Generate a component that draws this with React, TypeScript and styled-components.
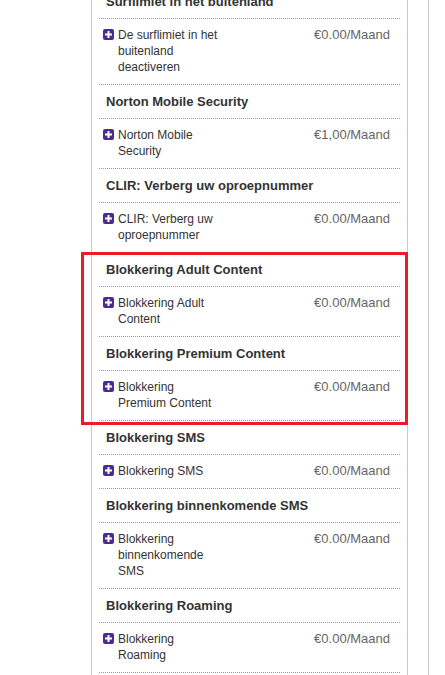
import React from "react";
import styled, { createGlobalStyle } from "styled-components";

const GlobalStyle = createGlobalStyle`
  html, body {
    margin: 0;
    padding: 0;
    background: #ffffff;
    overflow: hidden;
  }
  body {
    font-family: "Liberation Sans", Arial, sans-serif;
    color: #333333;
  }
`;

const Outer = styled.div`
  width: 428px;
  min-height: 700px;
  border-right: 1px solid #c9c9c9;
`;

const Panel = styled.div`
  margin-left: 91px;
  margin-top: -15px;
  width: 301px;
  min-height: 716px;
  padding: 0 7px;
  border-left: 1px solid #c9c9c9;
  border-right: 1px solid #c9c9c9;
  background: #ffffff;
`;

const Heading = styled.div`
  padding: 8px 7px;
  font-size: 13px;
  line-height: 17px;
  font-weight: bold;
  color: #333333;
  border-bottom: 1px dotted #9a9a9a;
  white-space: nowrap;
`;

const ItemRow = styled.div`
  display: flex;
  justify-content: space-between;
  align-items: flex-start;
  padding: 8px 10px 9px 4px;
  border-bottom: 1px dotted #9a9a9a;
`;

const Name = styled.div`
  display: flex;
  align-items: flex-start;
  gap: 4px;
`;

const NameText = styled.span`
  width: 104px;
  font-size: 12px;
  line-height: 16px;
  color: #333333;
`;

const Price = styled.span`
  font-size: 13px;
  line-height: 16px;
  color: #666666;
  white-space: nowrap;
`;

const PlusBox = styled.svg`
  flex: none;
  width: 11px;
  height: 11px;
  margin-top: 2px;
`;

const HighlightGroup = styled.div`
  position: relative;
  &::after {
    content: "";
    position: absolute;
    top: -1px;
    left: -18px;
    right: -8px;
    bottom: -4px;
    border: 3px solid #ed1c24;
    pointer-events: none;
  }
`;

const PlusIcon = () => (
  <PlusBox viewBox="0 0 11 11" aria-hidden="true">
    <rect x="0" y="0" width="11" height="11" rx="2" fill="#4b2c8c" />
    <rect x="2" y="4.5" width="7" height="2" fill="#ffffff" />
    <rect x="4.5" y="2" width="2" height="7" fill="#ffffff" />
  </PlusBox>
);

type Section = { title: string; item: string; price: string };

const before: Section[] = [
  {
    title: "Surflimiet in het buitenland",
    item: "De surflimiet in het buitenland deactiveren",
    price: "€0.00/Maand",
  },
  { title: "Norton Mobile Security", item: "Norton Mobile Security", price: "€1,00/Maand" },
  {
    title: "CLIR: Verberg uw oproepnummer",
    item: "CLIR: Verberg uw oproepnummer",
    price: "€0.00/Maand",
  },
];

const highlighted: Section[] = [
  { title: "Blokkering Adult Content", item: "Blokkering Adult Content", price: "€0.00/Maand" },
  {
    title: "Blokkering Premium Content",
    item: "Blokkering Premium Content",
    price: "€0.00/Maand",
  },
];

const after: Section[] = [
  { title: "Blokkering SMS", item: "Blokkering SMS", price: "€0.00/Maand" },
  {
    title: "Blokkering binnenkomende SMS",
    item: "Blokkering binnenkomende SMS",
    price: "€0.00/Maand",
  },
  { title: "Blokkering Roaming", item: "Blokkering Roaming", price: "€0.00/Maand" },
];

const SectionBlock = ({ s }: { s: Section }) => (
  <>
    <Heading>{s.title}</Heading>
    <ItemRow>
      <Name>
        <PlusIcon />
        <NameText>{s.item}</NameText>
      </Name>
      <Price>{s.price}</Price>
    </ItemRow>
  </>
);

export default function App() {
  return (
    <>
      <GlobalStyle />
      <Outer>
        <Panel>
          {before.map((s) => (
            <SectionBlock key={s.title} s={s} />
          ))}
          <HighlightGroup>
            {highlighted.map((s) => (
              <SectionBlock key={s.title} s={s} />
            ))}
          </HighlightGroup>
          {after.map((s) => (
            <SectionBlock key={s.title} s={s} />
          ))}
        </Panel>
      </Outer>
    </>
  );
}
